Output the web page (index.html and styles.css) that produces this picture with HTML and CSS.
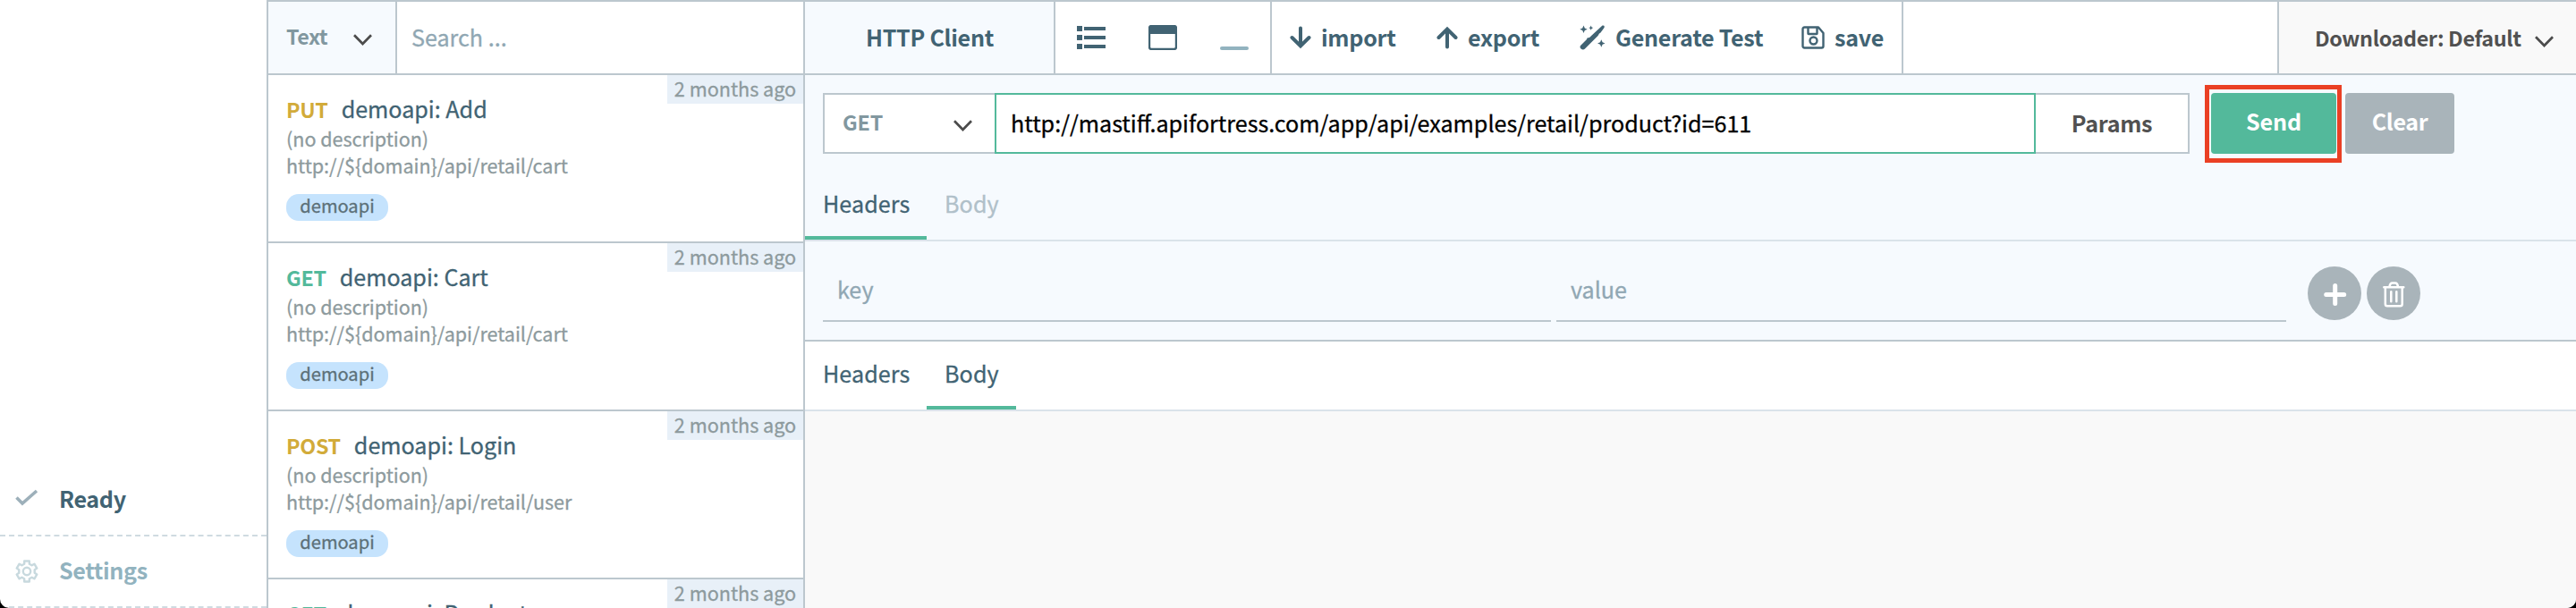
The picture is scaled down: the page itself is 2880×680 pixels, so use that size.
FILE: index.html
```
<!DOCTYPE html>
<html lang="en">
<head>
<meta charset="utf-8">
<title>HTTP Client</title>
<link rel="stylesheet" href="styles.css">
</head>
<body>
<div class="window">
  <nav class="sidebar">
    <div class="side-row ready">
      <svg class="side-icon check" width="26" height="20" viewBox="0 0 26 20"><path d="M1.500 9.500L8 16L24 2" fill="none" stroke="#9db0ba" stroke-width="3.600"/></svg>
      <span>Ready</span>
    </div>
    <div class="side-row settings">
      <svg class="side-icon" width="26" height="26" viewBox="0 0 26 26" fill="none" stroke="#c8d9de" stroke-width="2.400" stroke-linejoin="round"><path d="M10.200 1.500h5.600v3.200l2.800 1.600 2.800-1.600 2.900 4.900-2.600 1.600v3.600l2.600 1.600-2.900 4.900-2.800-1.600-2.800 1.600v3.200h-5.600v-3.200l-2.800-1.600-2.800 1.600-2.900-4.900 2.600-1.600v-3.600L1.700 9.600l2.900-4.900 2.800 1.600 2.800-1.600z"/><circle cx="13" cy="13" r="4.200"/></svg>
      <span>Settings</span>
    </div>
  </nav>

  <section class="library">
    <header class="search-bar">
      <div class="search-type"><span>Text</span>
        <svg width="21" height="13" viewBox="0 0 21 13"><path d="M1 1.300L10.500 11L20 1.300" fill="none" stroke="#4c4c4c" stroke-width="2.700"/></svg>
      </div>
      <div class="search-input">Search ...</div>
    </header>
    <article class="item">
      <span class="time">2 months ago</span>
      <h3><b class="put">PUT</b>demoapi: Add</h3>
      <p>(no description)</p>
      <p>http://${domain}/api/retail/cart</p>
      <span class="tag">demoapi</span>
    </article>
    <article class="item">
      <span class="time">2 months ago</span>
      <h3><b class="get">GET</b>demoapi: Cart</h3>
      <p>(no description)</p>
      <p>http://${domain}/api/retail/cart</p>
      <span class="tag">demoapi</span>
    </article>
    <article class="item">
      <span class="time">2 months ago</span>
      <h3><b class="post">POST</b>demoapi: Login</h3>
      <p>(no description)</p>
      <p>http://${domain}/api/retail/user</p>
      <span class="tag">demoapi</span>
    </article>
    <article class="item">
      <span class="time">2 months ago</span>
      <h3><b class="get">GET</b>demoapi: Product</h3>
    </article>
  </section>

  <main class="client">
    <header class="toolbar">
      <div class="title">HTTP Client</div>
      <div class="views">
        <svg width="32" height="28" viewBox="0 0 32 28" fill="#416373"><path d="M0 1h6v6H0zM0 11h6v6H0zM0 21h6v6H0zM8 2h24v4H8zM8 12h24v4H8zM8 22h24v4H8z"/></svg>
        <svg width="32" height="28" viewBox="0 0 32 28"><rect x="1" y="1" width="30" height="26" rx="2.500" fill="#fff" stroke="#416373" stroke-width="2.400"/><path d="M1 1h30v9H1z" fill="#416373"/></svg>
        <svg width="32" height="28" viewBox="0 0 32 28"><rect y="24" width="32" height="4" rx="2" fill="#92b3bf"/></svg>
      </div>
      <div class="actions">
        <div class="action import">
          <svg width="24" height="26" viewBox="0 0 24 26" fill="none" stroke="#416373" stroke-width="4" stroke-linecap="round"><path d="M12 2.500V21M2.500 13L12 22.500L21.500 13"/></svg>
          <span>import</span>
        </div>
        <div class="action export">
          <svg width="24" height="26" viewBox="0 0 24 26" fill="none" stroke="#416373" stroke-width="4" stroke-linecap="round"><path d="M12 23.500V4M2.500 13L12 3.500L21.500 13"/></svg>
          <span>export</span>
        </div>
        <div class="action generate">
          <svg width="30" height="28" viewBox="0 0 30 28" fill="#416373"><path d="M25.500 0.500Q28.500 0 27.500 3L23.500 8.500L22 9.500L20.500 12L6 26.500Q4 28.500 1.500 26.500Q-0.500 24.500 1.500 22.500L8 16L8.500 14.500L11 14Z"/><path d="M4.500 0.500L5.800 3.400L8.700 4.700L5.800 6L4.500 9L3.200 6L0.300 4.700L3.200 3.400ZM12.700 0.500L13.500 2.400L15.200 3.100L13.500 3.900L12.700 5.700L11.900 3.900L10.200 3.100L11.900 2.400ZM24.300 16.300L25.600 19.200L28.500 20.500L25.600 21.800L24.300 24.700L23 21.800L20 20.500L23 19.200Z"/></svg>
          <span>Generate Test</span>
        </div>
        <div class="action save">
          <svg width="26" height="26" viewBox="0 0 26 26" fill="none" stroke="#416373" stroke-width="2.400" stroke-linejoin="round"><path d="M3.500 1.500H19L24.500 8V22.500Q24.500 24.500 22.500 24.500H3.500Q1.500 24.500 1.500 22.500V3.500Q1.500 1.500 3.500 1.500ZM7.500 1.500V8.500Q7.500 9 8 9H17Q17.500 9 17.500 8.500V1.500"/><circle cx="13.500" cy="16.500" r="4"/></svg>
          <span>save</span>
        </div>
      </div>
      <div class="spacer"></div>
      <div class="downloader"><span>Downloader: Default</span>
        <svg width="21" height="13" viewBox="0 0 21 13"><path d="M1 1.300L10.500 11L20 1.300" fill="none" stroke="#4c4c4c" stroke-width="2.700"/></svg>
      </div>
    </header>

    <section class="request">
      <div class="url-row">
        <div class="method"><span>GET</span>
          <svg width="21" height="13" viewBox="0 0 21 13"><path d="M1 1.300L10.500 11L20 1.300" fill="none" stroke="#4c4c4c" stroke-width="2.700"/></svg>
        </div>
        <div class="url">http://mastiff.apifortress.com/app/api/examples/retail/product?id=611</div>
        <div class="params">Params</div>
        <div class="send-mark"><div class="btn send">Send</div></div>
        <div class="btn clear">Clear</div>
      </div>
      <div class="tabs">
        <div class="tab headers active">Headers</div>
        <div class="tab body muted">Body</div>
      </div>
      <div class="pair-row">
        <div class="field key">key</div>
        <div class="field value">value</div>
        <div class="round add"><svg width="60" height="60" viewBox="0 0 60 60"><path d="M30.700 21.500V41.500M20.700 31.500H40.700" stroke="#fff" stroke-width="5" stroke-linecap="round"/></svg></div>
        <div class="round"><svg width="60" height="60" viewBox="0 0 60 60" fill="none" stroke="#fff" stroke-width="2.500" stroke-linecap="round"><path d="M19.300 23.300H41.300M20.800 23.500V42Q20.800 44.300 23 44.300H37.500Q39.700 44.300 39.700 42V23.500M25.500 22.500Q26.200 18.600 28.500 18.600H32Q34.300 18.600 35 22.500M27.300 28.200V39.300M33.300 28.200V39.300"/></svg></div>
      </div>
    </section>

    <section class="response">
      <div class="tabs">
        <div class="tab headers">Headers</div>
        <div class="tab body active">Body</div>
      </div>
    </section>
  </main>
</div>
</body>
</html>
```
FILE: styles.css
```
* { box-sizing: border-box; }

html { background: #000; }

body {
  margin: 0;
  font-family: "Noto Sans CJK SC", "Noto Sans", sans-serif;
  font-size: 25.1px;
  line-height: 32px;
  color: #416373;
  -webkit-text-stroke: 0.3px;
}

.window {
  display: flex;
  height: 680px;
  overflow: hidden;
  background: #fff;
  border-radius: 0 0 10px 10px;
}

svg { display: block; flex: none; }

/* sidebar */
.sidebar {
  flex: none;
  width: 298px;
  display: flex;
  flex-direction: column;
  justify-content: flex-end;
}

.side-row {
  display: flex;
  align-items: center;
  height: 80px;
  padding-left: 17px;
  border-bottom: 2px dashed #cfdbe1;
  font-weight: 700;
  letter-spacing: -0.35px;
  -webkit-text-stroke: 0;
}

.side-row span { margin-left: 23px; padding-bottom: 4px; }
.side-icon.check { margin-bottom: 5px; }
.settings { color: #92b3bf; }

/* request library */
.library {
  flex: none;
  width: 602px;
  border: 2px solid #bcc7ce;
  border-bottom: 0;
  overflow: hidden;
}

.search-bar {
  display: flex;
  height: 82px;
  border-bottom: 2px solid #bcc7ce;
}

.search-type {
  display: flex;
  align-items: center;
  justify-content: space-between;
  width: 144px;
  padding: 0 26px 0 20px;
  background: #f6fafe;
  border-right: 2px solid #bcc7ce;
  font-size: 23.3px;
  font-weight: 700;
  letter-spacing: -0.45px;
  color: #81979f;
  -webkit-text-stroke: 0;
}

.search-type span { padding-bottom: 4px; }
.search-type svg { margin-top: 4px; }

.search-input {
  flex: 1;
  padding: 23px 0 0 16px;
  color: #90a7b3;
}

.item {
  position: relative;
  height: 188px;
  padding: 21px 20px 0;
  border-bottom: 2px solid #bcc7ce;
}

.item h3 {
  margin: 0 0 2px;
  font-size: inherit;
  font-weight: 400;
}

.item h3 b {
  margin-right: 15px;
  font-size: 23.3px;
  letter-spacing: -0.3px;
  -webkit-text-stroke: 0;
}

.put, .post { color: #d2ab3a; }
.get { color: #53b99b; }

.item p {
  margin: 0;
  font-size: 21.5px;
  line-height: 30px;
  color: #8d9a9d;
}

.tag {
  display: block;
  width: 114px;
  height: 30px;
  margin-top: 17px;
  border-radius: 14px;
  background: #c5e3fd;
  font-size: 20.1px;
  line-height: 26px;
  text-align: center;
  color: #5c7078;
}

.time {
  position: absolute;
  top: 0;
  right: 0;
  width: 152px;
  height: 32px;
  background: #e8f0f8;
  font-size: 21.6px;
  line-height: 30px;
  text-align: center;
  color: #8d9a9d;
}

/* main column */
.client {
  flex: 1;
  display: flex;
  flex-direction: column;
  border-top: 2px solid #bcc7ce;
}

.toolbar {
  display: flex;
  height: 82px;
  flex: none;
  border-bottom: 2px solid #bcc7ce;
  font-weight: 700;
  letter-spacing: -0.27px;
  -webkit-text-stroke: 0;
}

.title {
  width: 280px;
  padding: 23px 0 0 1px;
  background: #f6fafe;
  border-right: 2px solid #bcc7ce;
  text-align: center;
}

.views {
  display: flex;
  align-items: center;
  gap: 48px;
  width: 242px;
  padding-left: 24px;
  border-right: 2px solid #bcc7ce;
}

.actions {
  display: flex;
  padding-left: 20px;
  border-right: 2px solid #bcc7ce;
}

.action { display: flex; padding-top: 23px; }
.action svg { margin-top: 4px; }
.import { width: 164px; gap: 11px; }
.export { width: 160px; gap: 11px; }
.generate { width: 248px; gap: 10px; }
.generate svg { margin-top: 3px; }
.save { width: 112px; gap: 11px; }
.spacer { flex: 1; }

.downloader {
  display: flex;
  align-items: center;
  justify-content: space-between;
  width: 334px;
  padding: 0 25px 0 40px;
  background: #f9f9f9;
  border-left: 2px solid #bcc7ce;
  font-size: 23.3px;
  letter-spacing: -0.35px;
  color: #515151;
}

.downloader svg { margin-top: 8px; }

/* request editor */
.request {
  height: 298px;
  flex: none;
  background: #f6fafe;
  border-bottom: 2px solid #bcc7ce;
}

.url-row {
  display: flex;
  padding: 20px 0 0 20px;
  line-height: 62px;
}

.method {
  display: flex;
  align-items: center;
  justify-content: space-between;
  width: 192px;
  height: 68px;
  padding: 0 25px 0 20px;
  background: #fff;
  border: 2px solid #bcc7ce;
  border-right: 0;
  font-size: 23.3px;
  font-weight: 700;
  letter-spacing: -0.2px;
  color: #81979f;
  -webkit-text-stroke: 0;
}

.method span { padding-bottom: 4px; }
.method svg { margin-top: 5px; }

.url {
  width: 1164px;
  height: 68px;
  padding-left: 16px;
  background: #fff;
  border: 2px solid #53b99b;
  color: #000;
}

.params {
  width: 172px;
  height: 68px;
  background: #fff;
  border: 2px solid #bcc7ce;
  border-left: 0;
  font-weight: 700;
  letter-spacing: -0.27px;
  text-align: center;
  color: #515151;
  -webkit-text-stroke: 0;
}

.send-mark {
  flex: none;
  width: 153px;
  height: 87px;
  margin: -9px 0 -10px 17px;
  padding: 4px 0 0 2px;
  border: 5px solid #ea4024;
}

.btn {
  height: 68px;
  border-radius: 4px;
  color: #fff;
  font-weight: 700;
  letter-spacing: -0.1px;
  text-align: center;
  -webkit-text-stroke: 0;
}

.send { width: 140px; background: #53b99b; }
.clear { width: 122px; margin-left: 4px; background: #a9b4ba; letter-spacing: -0.4px; }

.tabs {
  display: flex;
  border-bottom: 2px solid #dae3ea;
}

.request .tabs { margin-top: 18px; }

.tab {
  height: 78px;
  padding-left: 20px;
  border-bottom: 4px solid transparent;
  line-height: 74px;
  letter-spacing: 0.1px;
}

.headers { width: 136px; }
.body { width: 100px; }
.active { border-bottom-color: #53b99b; }
.muted { color: #b0c0c9; }

.pair-row {
  display: flex;
  padding: 16px 0 0 20px;
}

.field {
  height: 74px;
  border-bottom: 2px solid #bcc7ce;
  padding-left: 16px;
  line-height: 74px;
  color: #90a7b3;
}

.key { width: 814px; }
.value { width: 816px; margin-left: 6px; }

.round {
  width: 60px;
  height: 60px;
  margin: 12px 6px 0 0;
  border-radius: 50%;
  background: #a9b4ba;
}

.add { margin-left: 24px; }

/* response panel */
.response { flex: 1; background: #f9f9f9; }
.response .tabs { background: #fff; }
.response .tab { height: 76px; line-height: 70px; }
```
